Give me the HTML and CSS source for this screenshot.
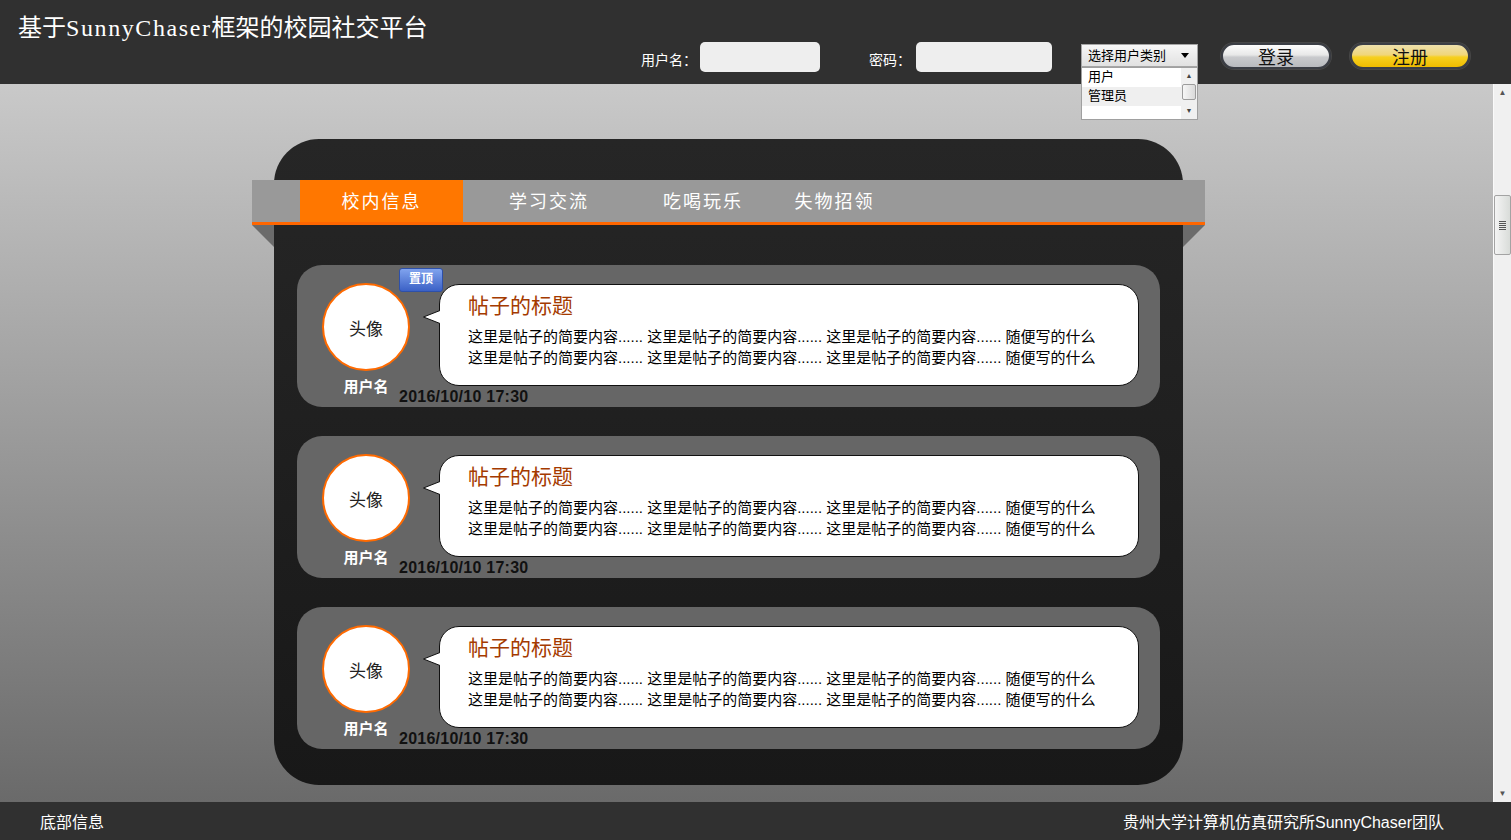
FILE: index.html
```html
<!DOCTYPE html>
<html lang="zh-CN">
<head>
    <meta charset="UTF-8">
    <title>基于SunnyChaser框架的校园社交平台</title>
    <link rel="stylesheet" href="styles.css">
</head>
<body>
    <header class="top-bar">
        <h1 class="site-title">基于<span class="brand">SunnyChaser</span>框架的校园社交平台</h1>

        <form class="login-form" onsubmit="return false;">
            <label class="field-label">用户名：</label>
            <input class="field-input" type="text">
            <label class="field-label pw">密码：</label>
            <input class="field-input wide" type="password">

            <div class="role-select">
                <div class="role-current">选择用户类别<span class="role-arrow"></span></div>
                <div class="role-list">
                    <ul class="role-options">
                        <li>用户</li>
                        <li class="hover">管理员</li>
                    </ul>
                    <div class="mini-scroll">
                        <div class="mini-arrow">▲</div>
                        <div class="mini-thumb"></div>
                        <div class="mini-space"></div>
                        <div class="mini-arrow">▼</div>
                    </div>
                </div>
            </div>

            <button class="btn btn-login">登录</button>
            <button class="btn btn-register">注册</button>
        </form>
    </header>

    <main class="content-area">
        <div class="content-scroll">
            <section class="board">
                <nav class="board-tabs">
                    <a class="tab active" href="#">校内信息</a>
                    <a class="tab" href="#">学习交流</a>
                    <a class="tab" href="#">吃喝玩乐</a>
                    <a class="tab" href="#">失物招领</a>
                </nav>

                <div class="post-list">
                    <div class="post">
                        <span class="pin-badge">置顶</span>
                        <div class="author">
                            <div class="avatar">头像</div>
                            <div class="author-name">用户名</div>
                        </div>
                        <div class="post-body">
                            <div class="bubble">
                                <svg class="bubble-tail" width="19" height="14" viewBox="0 0 19 14">
                                    <polygon points="17,0.5 0.5,7 17,13.5 19,13.5 19,0.5" fill="#fff"/>
                                    <polyline points="17,0.5 0.5,7 17,13.5" fill="none" stroke="#111" stroke-width="1"/>
                                </svg>
                                <h2 class="post-title">帖子的标题</h2>
                                <div class="post-summary">
                                    <p>这里是帖子的简要内容...... 这里是帖子的简要内容...... 这里是帖子的简要内容...... 随便写的什么</p>
                                    <p>这里是帖子的简要内容...... 这里是帖子的简要内容...... 这里是帖子的简要内容...... 随便写的什么</p>
                                </div>
                            </div>
                            <div class="post-time">2016/10/10 17:30</div>
                        </div>
                    </div>

                    <div class="post">
                        <div class="author">
                            <div class="avatar">头像</div>
                            <div class="author-name">用户名</div>
                        </div>
                        <div class="post-body">
                            <div class="bubble">
                                <svg class="bubble-tail" width="19" height="14" viewBox="0 0 19 14">
                                    <polygon points="17,0.5 0.5,7 17,13.5 19,13.5 19,0.5" fill="#fff"/>
                                    <polyline points="17,0.5 0.5,7 17,13.5" fill="none" stroke="#111" stroke-width="1"/>
                                </svg>
                                <h2 class="post-title">帖子的标题</h2>
                                <div class="post-summary">
                                    <p>这里是帖子的简要内容...... 这里是帖子的简要内容...... 这里是帖子的简要内容...... 随便写的什么</p>
                                    <p>这里是帖子的简要内容...... 这里是帖子的简要内容...... 这里是帖子的简要内容...... 随便写的什么</p>
                                </div>
                            </div>
                            <div class="post-time">2016/10/10 17:30</div>
                        </div>
                    </div>

                    <div class="post">
                        <div class="author">
                            <div class="avatar">头像</div>
                            <div class="author-name">用户名</div>
                        </div>
                        <div class="post-body">
                            <div class="bubble">
                                <svg class="bubble-tail" width="19" height="14" viewBox="0 0 19 14">
                                    <polygon points="17,0.5 0.5,7 17,13.5 19,13.5 19,0.5" fill="#fff"/>
                                    <polyline points="17,0.5 0.5,7 17,13.5" fill="none" stroke="#111" stroke-width="1"/>
                                </svg>
                                <h2 class="post-title">帖子的标题</h2>
                                <div class="post-summary">
                                    <p>这里是帖子的简要内容...... 这里是帖子的简要内容...... 这里是帖子的简要内容...... 随便写的什么</p>
                                    <p>这里是帖子的简要内容...... 这里是帖子的简要内容...... 这里是帖子的简要内容...... 随便写的什么</p>
                                </div>
                            </div>
                            <div class="post-time">2016/10/10 17:30</div>
                        </div>
                    </div>
                </div>
            </section>
        </div>

        <div class="scroll-rail">
            <div class="rail-arrow">▲</div>
            <div class="rail-gap"></div>
            <div class="rail-thumb"><span class="rail-grip"></span></div>
            <div class="rail-space"></div>
            <div class="rail-arrow">▼</div>
        </div>
    </main>

    <footer class="bottom-bar">
        <span>底部信息</span>
        <span>贵州大学计算机仿真研究所SunnyChaser团队</span>
    </footer>
</body>
</html>
```

FILE: styles.css
```css
* {
    box-sizing: border-box;
}
html, body {
    margin: 0;
    height: 100%;
}
body {
    font-family: "Liberation Sans", "Noto Sans CJK SC", sans-serif;
    display: flex;
    flex-direction: column;
    overflow: hidden;
}

/* header */
.top-bar {
    flex: none;
    height: 84px;
    background: #303030;
    display: flex;
    align-items: flex-start;
    padding: 0 41px 0 18px;
    position: relative;
    z-index: 5;
}
.site-title {
    margin: 12px 0 0;
    font-family: "Noto Sans CJK SC", sans-serif;
    font-size: 24px;
    line-height: 28px;
    font-weight: normal;
    color: #fff;
}
.site-title .brand {
    font-family: "Liberation Serif", serif;
    letter-spacing: 1.6px;
}
.login-form {
    margin: 42px 0 0 auto;
    height: 30px;
    display: flex;
    align-items: flex-start;
}
.field-label {
    margin-top: 10px;
    color: #fff;
    font-size: 14px;
    line-height: 16px;
}
.field-label.pw {
    margin-left: 49px;
}
.field-input {
    width: 120px;
    height: 30px;
    margin-left: 3px;
    border: none;
    border-radius: 5px;
    background: #eeeeee;
}
.field-input.wide {
    width: 136px;
    margin-left: 5px;
}
.role-select {
    position: relative;
    margin: 2px 0 0 29px;
    width: 117px;
    height: 23px;
}
.role-current {
    height: 23px;
    border: 1px solid #a5a5a5;
    background: linear-gradient(#f7f7f7, #e1e1e1);
    font-size: 13px;
    line-height: 21px;
    padding: 0 8px 0 6px;
    color: #000;
    display: flex;
    justify-content: space-between;
    align-items: center;
}
.role-arrow {
    width: 0;
    height: 0;
    border-left: 4px solid transparent;
    border-right: 4px solid transparent;
    border-top: 5px solid #000;
}
.role-list {
    position: absolute;
    top: 23px;
    left: 0;
    width: 117px;
    height: 53px;
    background: #fff;
    border: 1px solid #a0a0a0;
    display: flex;
}
.role-options {
    flex: 1;
    margin: 0;
    padding: 0;
    list-style: none;
    font-size: 13px;
}
.role-options li {
    height: 19px;
    line-height: 18px;
    padding-left: 6px;
    color: #000;
}
.role-options li.hover {
    background: #efefef;
}
.mini-scroll {
    width: 16px;
    background: #f0f0f0;
    display: flex;
    flex-direction: column;
}
.mini-arrow {
    height: 16px;
    font-size: 7px;
    line-height: 16px;
    text-align: center;
    color: #444;
}
.mini-thumb {
    height: 16px;
    margin: 0 1px;
    border: 1px solid #9c9c9c;
    border-radius: 2px;
    background: linear-gradient(90deg, #f6f6f6, #dadada);
}
.mini-space {
    flex: 1;
}
.btn {
    margin-top: 1px;
    height: 26px;
    padding: 0;
    border: 2px solid #3b3e45;
    border-radius: 13px;
    box-shadow: 0 0 0 1px #474747;
    font-family: "Noto Sans CJK SC", sans-serif;
    font-size: 18px;
    line-height: 20px;
    color: #111;
    cursor: pointer;
}
.btn-login {
    margin-left: 23px;
    width: 110px;
    background: linear-gradient(#fdfdfd 0%, #e8e8e8 45%, #c9cacd 55%, #b8babe 100%);
}
.btn-register {
    margin-left: 19px;
    width: 120px;
    background: linear-gradient(#eee0ac 0%, #f0d67a 45%, #f6d020 55%, #efbc00 100%);
}

/* main area */
.content-area {
    flex: 1;
    display: flex;
    min-height: 0;
}
.content-scroll {
    flex: 1;
    overflow-y: auto;
    background: linear-gradient(#c9c9c9, #6a6a6a);
}
.scroll-rail {
    flex: none;
    width: 18px;
    background: #f0f0f0;
    border-left: 1px solid #fafafa;
    display: flex;
    flex-direction: column;
}
.rail-arrow {
    height: 17px;
    font-size: 8px;
    line-height: 17px;
    text-align: center;
    color: #555;
}
.rail-gap {
    height: 94px;
}
.rail-thumb {
    height: 60px;
    border: 1px solid #a3a3a3;
    border-radius: 2px;
    background: linear-gradient(90deg, #f4f4f4, #d9dcd9);
    display: flex;
    align-items: center;
    justify-content: center;
}
.rail-grip {
    width: 7px;
    height: 9px;
    background: repeating-linear-gradient(#555 0 1px, transparent 1px 2px);
}
.rail-space {
    flex: 1;
}
.board {
    width: 909px;
    margin: 55px 0 17px 274px;
    padding: 41px 23px 36px;
    border-radius: 45px;
    background: linear-gradient(#262626, #181818);
}
.board-tabs {
    position: relative;
    display: flex;
    height: 45px;
    margin: 0 -45px;
    padding-left: 48px;
    background: #999999;
    border-bottom: 3px solid #ff6600;
}
.board-tabs::before,
.board-tabs::after {
    content: "";
    position: absolute;
    top: calc(100% + 3px);
    width: 0;
    height: 0;
    border-top: 22px solid #6b6b6b;
}
.board-tabs::before {
    left: 0;
    border-left: 22px solid transparent;
}
.board-tabs::after {
    right: 0;
    border-right: 22px solid transparent;
}
.tab {
    display: block;
    padding-top: 2px;
    line-height: 40px;
    text-align: center;
    color: #fff;
    font-size: 18px;
    letter-spacing: 2px;
    text-decoration: none;
}
.tab:nth-child(1) { width: 163px; }
.tab:nth-child(2) { width: 172px; }
.tab:nth-child(3) { width: 136px; }
.tab:nth-child(4) { width: 127px; }
.tab.active {
    background: #ff7700;
}

/* posts */
.post-list {
    margin-top: 40px;
    display: flex;
    flex-direction: column;
    gap: 29px;
}
.post {
    position: relative;
    height: 142px;
    padding: 18px 21px 0 25px;
    background: #666666;
    border-radius: 25px;
    display: flex;
}
.pin-badge {
    position: absolute;
    left: 102px;
    top: 3px;
    width: 44px;
    height: 24px;
    border: 1px solid #2e50a8;
    border-radius: 3px;
    background: linear-gradient(#80a3ee, #3b61c6);
    color: #fff;
    font-size: 12px;
    font-weight: bold;
    line-height: 20px;
    text-align: center;
}
.author {
    width: 88px;
}
.avatar {
    width: 88px;
    height: 88px;
    border-radius: 50%;
    border: 2px solid #ff6a00;
    background: #fff;
    display: flex;
    align-items: center;
    justify-content: center;
    font-size: 17px;
    color: #222;
}
.author-name {
    margin-top: 7px;
    font-size: 15px;
    line-height: 18px;
    font-weight: bold;
    color: #fff;
    text-align: center;
}
.post-body {
    margin-left: 29px;
    padding-top: 1px;
}
.bubble {
    position: relative;
    width: 700px;
    height: 102px;
    padding: 8px 20px 0 28px;
    border: 1px solid #111;
    border-radius: 20px;
    background: #fff;
}
.bubble-tail {
    position: absolute;
    left: -17px;
    top: 25px;
}
.post-title {
    margin: 0;
    font-size: 21px;
    line-height: 26px;
    font-weight: normal;
    color: #a43a00;
}
.post-summary {
    margin-top: 7px;
    font-size: 15px;
    line-height: 21px;
    color: #000;
    white-space: nowrap;
}
.post-summary p {
    margin: 0;
}
.post-time {
    margin: 2px 0 0 -40px;
    font-family: "Liberation Sans", sans-serif;
    font-size: 16px;
    line-height: 18px;
    letter-spacing: 0.25px;
    font-weight: bold;
    color: #111;
}

/* footer */
.bottom-bar {
    flex: none;
    height: 38px;
    padding: 0 67px 0 40px;
    background: #303030;
    color: #fff;
    font-size: 16px;
    display: flex;
    justify-content: space-between;
    align-items: center;
}
```
